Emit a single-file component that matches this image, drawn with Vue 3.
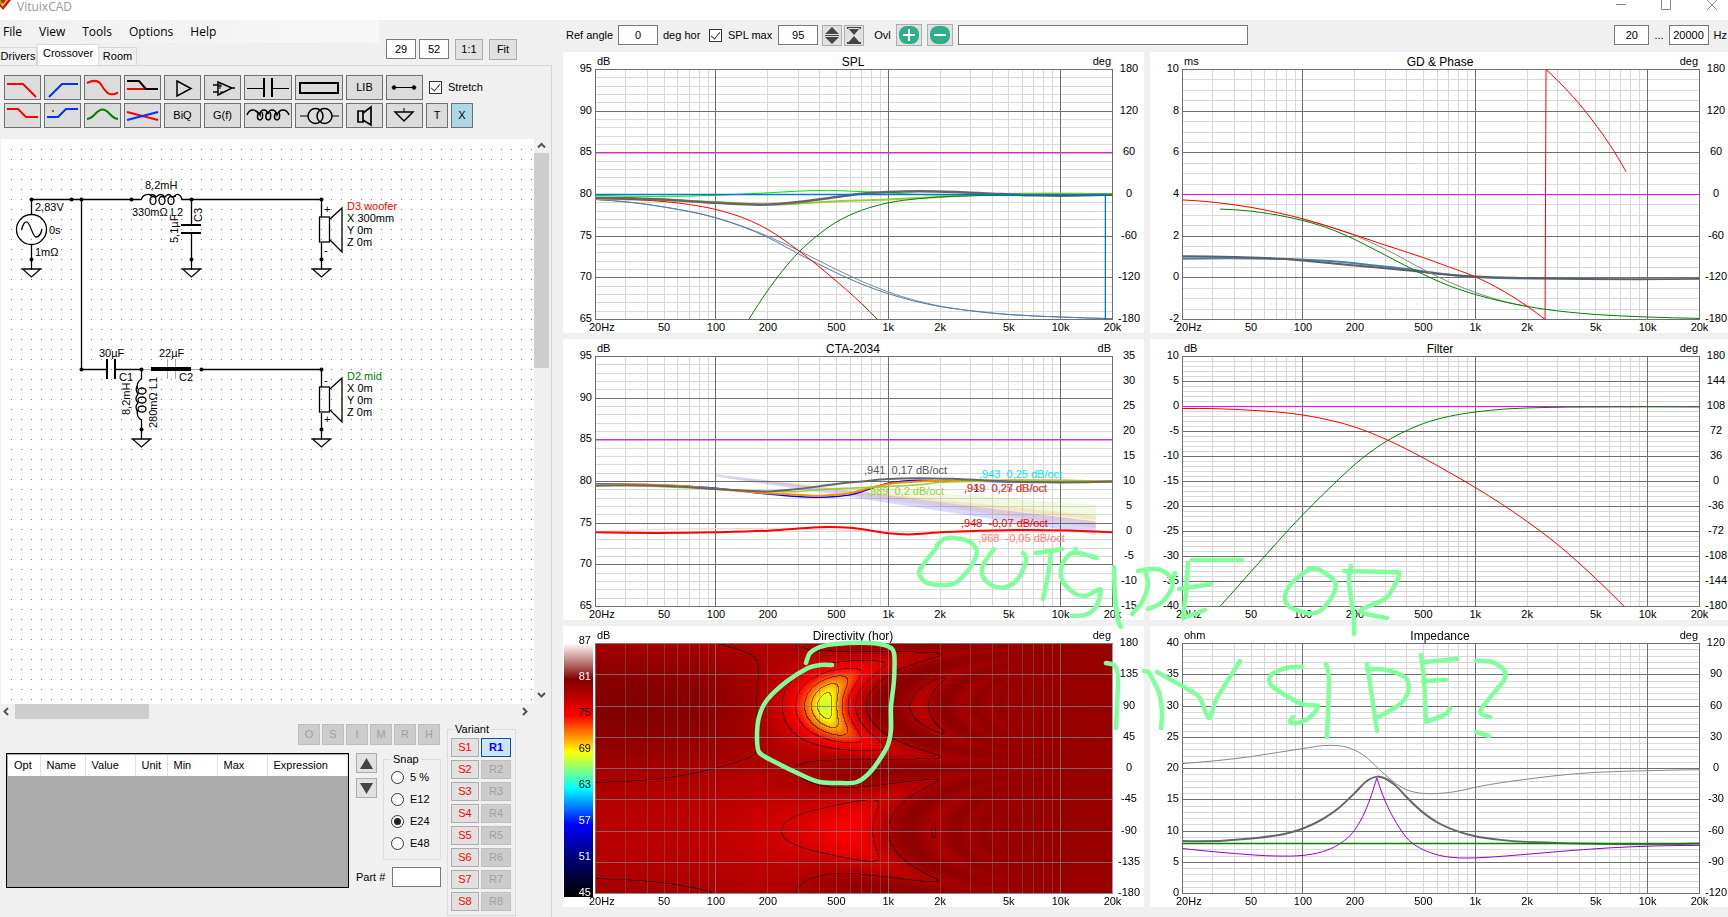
<template>
  <div class="app">
    <header class="titlebar">
      <svg class="logo" width="12" height="20" viewBox="0 0 12 20">
        <path d="M-5 0H11L3 10Z" fill="#d01010" />
        <path d="M-2 0L2.500 7L8 0Z" fill="#f5d020" />
        <path d="M0 0L3 4L6 0Z" fill="#c82010" />
        <path d="M0 2L1.500 4L2 1Z" fill="#2a8a20" />
      </svg>
      <span class="app-name">VituixCAD</span>
      <svg class="window-controls" width="104" height="20" viewBox="0 0 104 20">
        <path d="M0 4.500H10M45.500 0V9.500H54.500V0M91 0L101 10M101 0L91 10" />
      </svg>
    </header>

    <main class="workspace">
      <section class="left-panel">
        <div class="left-head">
          <div class="head-nav">
            <nav class="menu">
              <button v-for="item in menuItems" :key="item" type="button">{{ item }}</button>
            </nav>
            <div class="tabs">
              <button
                v-for="tab in tabs"
                :key="tab"
                type="button"
                :class="['tab', 'tab-' + tab.toLowerCase(), { active: tab === activeTab }]"
                @click="activeTab = tab"
              >{{ tab }}</button>
            </div>
          </div>
          <div class="zoom-tools">
            <input v-model="rows" class="field" aria-label="Rows" />
            <input v-model="cols" class="field" aria-label="Columns" />
            <button type="button" class="btn">1:1</button>
            <button type="button" class="btn">Fit</button>
          </div>
        </div>

        <div class="tab-page">
          <div class="parts">
            <div v-for="(row, r) in partRows" :key="r" class="parts-row">
              <button
                v-for="part in row"
                :key="part.name"
                type="button"
                :class="['part', part.size]"
                :aria-label="part.name"
              >
                <template v-if="part.text">{{ part.text }}</template>
                <svg v-else :width="part.size === 'wide' ? 48 : 37" height="25">
                  <path
                    v-for="(s, i) in part.strokes"
                    :key="i"
                    :d="s.d"
                    :stroke="s.color || '#000'"
                    :stroke-width="s.w || 2"
                    :fill="s.fill || 'none'"
                  />
                </svg>
              </button>
              <label v-if="r === 0" class="check">
                <input v-model="stretch" type="checkbox" />
                Stretch
              </label>
            </div>
          </div>

          <div class="canvas-wrap">
            <svg class="schematic" viewBox="1 139 533 565">
              <defs>
                <pattern id="dots" x="11" y="149" width="10" height="10" patternUnits="userSpaceOnUse">
                  <rect width="1" height="1" fill="#808080" />
                </pattern>
              </defs>
              <rect x="11" y="149" width="523" height="555" fill="url(#dots)" />

              <g class="wire">
                <path d="M31.500 199.500H141.500M181.500 199.500H321.500V217M81.500 199.500V369.500H106M115.500 369.500H141.500V379" />
                <path d="M31.500 199.500V214M31.500 245V269M191.500 199.500V225M191.500 233V269M321.500 243V269" />
                <path d="M201.500 369.500H321.500V387M321.500 413V439M141.500 419V439" />
              </g>
              <path d="M141.500 369.500H151M191 369.500H201.500M167.500 359V379M175.500 359V379" stroke="#aaa" fill="none" />
              <path d="M151 369H191" stroke="#000" stroke-width="4" />

              <circle v-for="(n, i) in nodes" :key="i" :cx="n[0]" :cy="n[1]" r="2" />
              <path
                v-for="(g, i) in grounds"
                :key="'g' + i"
                :d="`M${g[0] - 9} ${g[1]}h18l-9 8z`"
                class="symbol"
              />

              <ellipse cx="31.500" cy="229.500" rx="15" ry="15" class="symbol" />
              <path d="M21.500 230C23 224 25 221 27 222C31 224 32 236 36 237C39 237 41 234 42 229" class="symbol" />

              <g class="symbol">
                <path d="M141.500 199.500C142 195 150 192 153 197M174 197C177 192 181 195 182 199.500" />
                <path d="M150 196Q153 193 156 197Q161 192 165 197Q169 192 172 197L176 196" />
                <ellipse cx="153" cy="200.500" rx="3" ry="4" />
                <ellipse cx="162" cy="200.500" rx="3" ry="4" />
                <ellipse cx="171" cy="200.500" rx="3" ry="4" />
                <path d="M141.500 379Q136 382 137.500 389M137.500 410Q136 417 141.500 420" />
                <path d="M137 386Q135 390 138 394Q134 399 138 403Q134 407 138 412" />
                <ellipse cx="142" cy="391" rx="4" ry="3" />
                <ellipse cx="142" cy="400" rx="4" ry="3" />
                <ellipse cx="142" cy="409" rx="4" ry="3" />
              </g>

              <path d="M181 225H201M181 233H201M107 359V379M115 359V379" stroke="#000" stroke-width="2" />

              <g v-for="y in [0, 170]" :key="y" class="symbol">
                <rect x="319.500" :y="217 + y" width="10" height="25" />
                <path :d="`M330 ${219 + y}L342 ${208 + y}V${252 + y}L330 ${240 + y}`" />
              </g>

              <text
                v-for="(t, i) in schematicTexts"
                :key="'t' + i"
                :x="t.x"
                :y="t.y"
                :fill="t.color || '#000'"
                :transform="t.up ? `rotate(-90 ${t.x} ${t.y})` : null"
              >{{ t.text }}</text>
            </svg>
            <div class="vscroll">
              <svg width="15" height="14"><path d="M4 8.500L7.500 5L11 8.500" /></svg>
              <div class="vthumb"></div>
              <svg class="down" width="15" height="17"><path d="M4 6L7.500 9.500L11 6" /></svg>
            </div>
          </div>
          <div class="hscroll">
            <svg width="15" height="15"><path d="M8 4L4.500 7.500L8 11" /></svg>
            <div class="hthumb"></div>
            <svg class="right" width="15" height="15"><path d="M4 4L7.500 7.500L4 11" /></svg>
          </div>

          <div class="bottom">
            <div class="bottom-main">
              <div class="modes">
                <button v-for="m in modes" :key="m" type="button" class="btn" disabled>{{ m }}</button>
              </div>
              <div class="bottom-row">
                <div class="grid-box">
                  <table>
                    <colgroup>
                      <col v-for="c in columns" :key="c.name" :class="c.size" />
                    </colgroup>
                    <thead>
                      <tr>
                        <th v-for="c in columns" :key="c.name">{{ c.name }}</th>
                      </tr>
                    </thead>
                  </table>
                </div>
                <div class="side">
                  <div class="side-top">
                    <div class="arrows">
                      <button type="button" class="btn" aria-label="Up">
                        <svg width="13" height="11"><path d="M0 11L6.500 0L13 11Z" /></svg>
                      </button>
                      <button type="button" class="btn" aria-label="Down">
                        <svg width="13" height="11"><path d="M0 0L6.500 11L13 0Z" /></svg>
                      </button>
                    </div>
                    <fieldset class="snap">
                      <legend>Snap</legend>
                      <label v-for="s in snaps" :key="s">
                        <input v-model="snap" type="radio" name="snap" :value="s" />
                        {{ s }}
                      </label>
                    </fieldset>
                  </div>
                  <label class="part-no">
                    <span>Part #</span>
                    <input v-model="partNo" class="field" />
                  </label>
                </div>
              </div>
            </div>
            <fieldset class="variant">
              <legend>Variant</legend>
              <div class="variant-grid">
                <template v-for="n in 8" :key="n">
                  <button type="button" class="btn s-btn">S{{ n }}</button>
                  <button type="button" :class="['btn', { current: n === 1 }]" :disabled="n > 1">R{{ n }}</button>
                </template>
              </div>
            </fieldset>
          </div>
        </div>
      </section>

      <section class="right-panel">
        <div class="chart-tools">
          <label class="angle">Ref angle <input v-model="refAngle" class="field w40" /></label>
          <span class="deg">deg hor</span>
          <label class="check"><input v-model="splMaxOn" type="checkbox" /> SPL max</label>
          <input v-model="splMax" class="field w40 spl" aria-label="SPL max value" />
          <button type="button" class="btn spin" aria-label="Expand scale">
            <svg width="14" height="17"><path d="M0 7L7 0L14 7ZM0 10L7 17L14 10ZM0 8h14v1H0z" /></svg>
          </button>
          <button type="button" class="btn spin" aria-label="Compress scale">
            <svg width="14" height="17"><path d="M1 1L7 8L13 1ZM1 16L7 9L13 16ZM0 0h14v2H0zM0 15h14v2H0z" /></svg>
          </button>
          <span class="ovl">Ovl</span>
          <button type="button" class="btn overlay" aria-label="Add overlay">
            <svg width="20" height="18"><rect width="20" height="18" rx="8" fill="#2eae8c" /><path d="M4 9H16M10 3V15" stroke="#fff" stroke-width="2" /></svg>
          </button>
          <button type="button" class="btn overlay" aria-label="Remove overlay">
            <svg width="20" height="18"><rect width="20" height="18" rx="8" fill="#2eae8c" /><path d="M4 9H16" stroke="#fff" stroke-width="2" /></svg>
          </button>
          <input v-model="overlayName" class="field name" aria-label="Overlay name" />
          <div class="range">
            <input v-model="fMin" class="field w35" aria-label="Minimum frequency" />
            <span>...</span>
            <input v-model="fMax" class="field w40" aria-label="Maximum frequency" />
            <span>Hz</span>
          </div>
        </div>

        <div class="charts">
          <svg
            v-for="(c, i) in charts"
            :key="c.title"
            class="chart"
            :viewBox="`0 0 ${i % 2 ? 578 : 581} 281`"
          >
            <template v-if="c.heat">
              <defs>
                <linearGradient id="scale" x1="0" y1="0" x2="0" y2="1">
                  <stop v-for="s in colorStops" :key="s[0]" :offset="(87 - s[0]) / 42" :stop-color="`rgb(${s[1]})`" />
                </linearGradient>
              </defs>
              <rect x="1" y="17" width="29" height="254" fill="url(#scale)" />
              <foreignObject x="32" y="17" width="517" height="250">
                <canvas ref="heatCanvas" class="heat" width="517" height="250"></canvas>
              </foreignObject>
            </template>

            <g :class="c.heat ? 'grid-heat' : 'grid'" shape-rendering="crispEdges">
              <path v-if="c.minor" class="minor" :d="hLines(c.minor)" />
              <path class="minor" :d="minorV" />
              <path class="major" :d="hLines(c.major)" />
              <path class="major" :d="majorV" />
              <rect class="major" x="32.500" y="17.500" width="517" height="250" />
            </g>

            <path
              v-for="(b, k) in c.bands || []"
              :key="'b' + k"
              :d="bandPath(c, b.points)"
              :fill="b.color"
              fill-opacity="0.15"
            />
            <path
              v-for="(l, k) in c.lines"
              :key="'l' + k"
              :d="linePath(c, l)"
              :stroke="l.color"
              :stroke-width="l.w || 1"
              fill="none"
            />

            <text class="chart-title" x="290" y="14">{{ c.title }}</text>
            <text x="34" y="13">{{ c.unit }}</text>
            <text x="548" y="13" text-anchor="end">{{ c.rightUnit }}</text>
            <text
              v-for="(v, k) in c.left"
              :key="'v' + k"
              :x="c.heat ? 28 : 29"
              :y="c.heat ? 18 + k * 36 : 20 + (250 * k) / (c.left.length - 1)"
              :fill="c.heat && [81, 57, 51, 45].includes(v) ? '#fff' : '#000'"
              text-anchor="end"
            >{{ v }}</text>
            <text
              v-for="(v, k) in c.right"
              :key="'r' + k"
              x="566"
              :y="20 + (250 * k) / (c.right.length - 1)"
              text-anchor="middle"
            >{{ v }}</text>
            <text x="26" y="279">20Hz</text>
            <text v-for="t in freqLabels" :key="t[0]" :x="fx(t[0])" y="279" text-anchor="middle">{{ t[1] }}</text>
            <text
              v-for="(n, k) in c.notes || []"
              :key="'n' + k"
              class="note"
              :x="n[0]"
              :y="n[1]"
              :fill="n[2]"
            >{{ n[3] }}</text>
          </svg>

          <svg class="ink" viewBox="563 52 1165 855">
            <path v-for="(s, i) in inkStrokes" :key="i" :d="inkPath(s)" />
          </svg>
        </div>
      </section>
    </main>
  </div>
</template>

<script setup>
import { ref, onMounted } from 'vue'

const menuItems = ['File', 'View', 'Tools', 'Options', 'Help']
const tabs = ['Drivers', 'Crossover', 'Room']
const activeTab = ref('Crossover')
const rows = ref('29')
const cols = ref('52')
const stretch = ref(true)
const modes = ['O', 'S', 'I', 'M', 'R', 'H']
const snaps = ['5 %', 'E12', 'E24', 'E48']
const snap = ref('E24')
const partNo = ref('')
const refAngle = ref('0')
const splMaxOn = ref(true)
const splMax = ref('95')
const overlayName = ref('')
const fMin = ref('20')
const fMax = ref('20000')
const heatCanvas = ref(null)

const columns = [
  { name: 'Opt', size: 'c-opt' },
  { name: 'Name', size: 'c-name' },
  { name: 'Value', size: 'c-value' },
  { name: 'Unit', size: 'c-unit' },
  { name: 'Min', size: 'c-value' },
  { name: 'Max', size: 'c-value' },
  { name: 'Expression', size: 'c-expr' }
]

const RED = '#f00'
const BLUE = '#0030ff'
const GREEN = '#008000'

const partRows = [
  [
    { name: 'Low pass', strokes: [{ d: 'M3 9H19L32 22', color: RED }] },
    { name: 'High pass', strokes: [{ d: 'M5 22L18 9H34', color: BLUE }] },
    { name: 'All pass', strokes: [{ d: 'M3 8C9 5 14 5 17 9.500S22 18 26 19S31 19 34 17.500', color: RED }] },
    { name: 'Shelf', strokes: [{ d: 'M3 14H23', color: RED }, { d: 'M3 6H15L22 14H34' }] },
    { name: 'Buffer', strokes: [{ d: 'M13 6L27 13.500L13 21Z', w: 1.5 }] },
    { name: 'Op amp', strokes: [{ d: 'M14 7L28 13L14 20ZM9 10H14M9 17H14M28 13H31', w: 1.5 }, { d: 'M16 8V14M14 11H18M16 17H19', w: 1 }] },
    { name: 'Capacitor', size: 'wide', strokes: [{ d: 'M3 13.500H20M28 13.500H45', w: 1 }, { d: 'M20 3V22M28 3V22' }] },
    { name: 'Resistor', size: 'wide', strokes: [{ d: 'M5 8H43V18H5Z' }] },
    { name: 'Library', text: 'LIB' },
    { name: 'Wire', strokes: [{ d: 'M8 12.500H28', w: 1 }, { d: 'M6 12.500a2 2 0 1 0 4 0a2 2 0 1 0 -4 0M26 12.500a2 2 0 1 0 4 0a2 2 0 1 0 -4 0', fill: '#000', w: 0.5 }] }
  ],
  [
    { name: 'Low shelf', strokes: [{ d: 'M3 6H14L22 14H34', color: RED }] },
    { name: 'High shelf', strokes: [{ d: 'M3 14H14L22 6H34', color: BLUE }, { d: 'M8 8H10', w: 1 }] },
    { name: 'Peak', strokes: [{ d: 'M3 16C11 15 12 6.500 18.500 6.500S26 15 34 16', color: GREEN }] },
    { name: 'Tilt', strokes: [{ d: 'M3 9L34 17', color: RED }, { d: 'M3 17L34 9', color: BLUE }] },
    { name: 'Biquad', text: 'BiQ' },
    { name: 'Transfer function', text: 'G(f)' },
    { name: 'Inductor', size: 'wide', strokes: [{ d: 'M3 12Q5 7 9 7Q12 7 16 12Q16 7 20 7Q23 7 24 11Q25 7 28 7Q32 7 33 12Q35 7 39 7Q43 7 45 12', w: 1.5 }, { d: 'M15 9C9 19 22 20 18 9M23 9C18 19 30 20 26 9M32 9C26 19 39 20 35 9', w: 1.5 }] },
    { name: 'Transformer', size: 'wide', strokes: [{ d: 'M5 13H13M37 13H44', w: 1 }, { d: 'M13 13a7.500 7.500 0 1 0 15 0a7.500 7.500 0 1 0 -15 0M22 13a7.500 7.500 0 1 0 15 0a7.500 7.500 0 1 0 -15 0', w: 1.5 }] },
    { name: 'Driver', strokes: [{ d: 'M12 8H17V19H12ZM17 10L25 4V22L17 17', w: 1.7 }] },
    { name: 'Ground', strokes: [{ d: 'M18 5V9', w: 1 }, { d: 'M9 9H27L18 18Z', w: 1.5 }] },
    { name: 'Text', text: 'T', size: 'small' },
    { name: 'Delete', text: 'X', size: 'small marked' }
  ]
]

const nodes = [
  [31.5, 199.5], [71.5, 199.5], [81.5, 199.5], [131.5, 199.5], [191.5, 199.5], [321.5, 199.5],
  [31.5, 259.5], [191.5, 259.5], [321.5, 259.5], [81.5, 369.5], [141.5, 369.5], [201.5, 369.5],
  [321.5, 369.5], [141.5, 429.5], [321.5, 429.5]
]
const grounds = [[31.5, 269], [191.5, 269], [321.5, 269], [141.5, 439], [321.5, 439]]

const schematicTexts = [
  { x: 35, y: 211, text: '2,83V' },
  { x: 49, y: 234, text: '0s' },
  { x: 35, y: 256, text: '1mΩ' },
  { x: 145, y: 189, text: '8,2mH' },
  { x: 132, y: 216, text: '330mΩ L2' },
  { x: 178, y: 243, text: '5,1µF', up: true },
  { x: 202, y: 222, text: 'C3', up: true },
  { x: 99, y: 357, text: '30µF' },
  { x: 159, y: 357, text: '22µF' },
  { x: 119, y: 381, text: 'C1' },
  { x: 179, y: 381, text: 'C2' },
  { x: 130, y: 415, text: '8,2mH', up: true },
  { x: 157, y: 428, text: '280mΩ L1', up: true },
  { x: 324, y: 213, text: '+' },
  { x: 324, y: 254, text: '-' },
  { x: 324, y: 384, text: '-' },
  { x: 324, y: 423, text: '+' },
  { x: 347, y: 210, text: 'D3 woofer', color: RED },
  { x: 347, y: 222, text: 'X 300mm' },
  { x: 347, y: 234, text: 'Y 0m' },
  { x: 347, y: 246, text: 'Z 0m' },
  { x: 347, y: 380, text: 'D2 mid', color: GREEN },
  { x: 347, y: 392, text: 'X 0m' },
  { x: 347, y: 404, text: 'Y 0m' },
  { x: 347, y: 416, text: 'Z 0m' }
]

const freqLabels = [[50, '50'], [100, '100'], [200, '200'], [500, '500'], [1000, '1k'], [2000, '2k'], [5000, '5k'], [10000, '10k'], [20000, '20k']]

function steps(from, to, n) {
  return Array.from({ length: n + 1 }, (_, i) => from + ((to - from) * i) / n)
}

const charts = [
  {
    title: 'SPL', unit: 'dB', rightUnit: 'deg', top: 95, bottom: 65, major: 6, minor: 30,
    left: steps(95, 65, 6), right: steps(180, -180, 6),
    lines: [
      { color: '#c3c', w: 1.5, points: [[20, 85], [20000, 85]] },
      { color: '#888', points: [[20, 79.4], [50, 78.5], [100, 77.2], [200, 75], [300, 73.3], [500, 71], [700, 69.6], [1000, 68.3], [2000, 66.6], [3000, 66.05], [5000, 65.6], [10000, 65.3], [20000, 65.1]] },
      { color: '#4682b4', points: [[20, 79.4], [50, 78.5], [100, 77.2], [200, 74.85], [300, 72.9], [500, 70.6], [700, 69.25], [1000, 68.1], [2000, 66.55], [3000, 66.05], [5000, 65.6], [10000, 65.3], [20000, 65.1]] },
      { color: '#00e800', points: [[20, 79.9], [100, 79.9], [160, 80.1], [200, 80.2], [300, 80.4], [450, 80.5], [600, 80.4], [800, 80.3], [1500, 80], [4000, 80]] },
      { color: '#9acd32', w: 2, points: [[20, 79.5], [100, 79.1], [200, 78.8], [300, 78.9], [500, 79.2], [1000, 79.4], [2000, 79.7], [4000, 80], [20000, 80]] },
      { color: RED, points: [[20, 79.5], [40, 79.3], [70, 78.8], [100, 78.2], [150, 77.05], [200, 75.8], [300, 73.3], [500, 69.6], [700, 66.9], [865, 65]] },
      { color: '#666', w: 2.5, points: [[20, 79.6], [50, 79.4], [100, 79], [200, 78.8], [300, 79.1], [500, 79.7], [700, 80.1], [1000, 80.3], [1500, 80.4], [2500, 80.3], [4000, 80.1], [7000, 79.9], [20000, 80]] },
      { color: GREEN, points: [[155, 65], [200, 68.5], [300, 73], [400, 75.3], [500, 76.7], [700, 78.1], [1000, 79], [1500, 79.5], [2500, 79.8], [5000, 79.9], [20000, 79.9]] },
      { color: '#0078d7', w: 1.3, straight: true, points: [[20, 80], [18180, 80], [18180, 65]] }
    ]
  },
  {
    title: 'GD & Phase', unit: 'ms', rightUnit: 'deg', top: 10, bottom: -2, major: 6, minor: 24,
    left: steps(10, -2, 6), right: steps(180, -180, 6),
    lines: [
      { color: '#f0f', points: [[20, 4], [20000, 4]] },
      { color: '#4682b4', w: 2, points: [[20, 0.92], [80, 0.9], [150, 0.8], [250, 0.61], [400, 0.42], [600, 0.22], [1000, 0.04], [3000, -0.03], [5000, -0.03]] },
      { color: '#5f5f5f', w: 2, points: [[20, 1.04], [40, 1], [80, 0.9], [100, 0.83], [200, 0.59], [400, 0.36], [600, 0.2], [1000, 0.06], [2000, -0.01], [20000, -0.05]] },
      { color: '#888', points: [[100, 2.8], [150, 2.39], [200, 2.03], [300, 1.38], [500, 0.4], [700, -0.19], [1000, -0.7], [1500, -1.15], [2000, -1.37]] },
      { color: GREEN, points: [[33, 3.3], [50, 3.2], [80, 2.93], [100, 2.75], [150, 2.29], [200, 1.84], [300, 1.09], [500, 0.16], [700, -0.37], [1000, -0.8], [1500, -1.17], [2500, -1.5], [5000, -1.76], [10000, -1.88], [20000, -1.95]] },
      { color: RED, points: [[20, 3.74], [50, 3.38], [100, 2.83], [200, 2.06], [300, 1.57], [500, 0.97], [700, 0.53], [1000, 0.05], [1500, -0.7], [2000, -1.36], [2540, -2]] },
      { color: RED, straight: true, points: [[2540, -2], [2573, 10]] },
      { color: RED, points: [[2573, 10], [3000, 9.47], [4000, 8.36], [5000, 7.35], [6000, 6.42], [7500, 5.09]] }
    ]
  },
  {
    title: 'CTA-2034', unit: 'dB', rightUnit: 'dB', top: 95, bottom: 65, major: 6, minor: 30,
    left: steps(95, 65, 6), right: steps(35, -15, 10),
    bands: [
      { color: '#9acd32', points: [[100, 80.6], [16000, 77.2], [16000, 75.4]] },
      { color: '#ff8c00', points: [[100, 80.6], [16000, 75.9], [16000, 74.4]] },
      { color: '#0000ff', points: [[100, 80.9], [16000, 75.2], [16000, 73.6], [100, 80.6]] }
    ],
    lines: [
      { color: '#c3c', w: 1.5, points: [[20, 85], [20000, 85]] },
      { color: '#fcd0d0', points: [[20, 74], [300, 74.3], [700, 74.1], [20000, 74]] },
      { color: '#00f', w: 1.5, points: [[20, 79.7], [60, 79.5], [100, 79.2], [200, 78.5], [300, 78.2], [400, 78.1], [500, 78.2], [600, 78.4], [800, 79.2], [1000, 79.8], [1300, 80.1], [2000, 80.1], [4000, 80], [20000, 80]] },
      { color: '#ff8c00', w: 2, points: [[20, 79.6], [60, 79.5], [100, 79.1], [200, 78.6], [300, 78.4], [400, 78.3], [500, 78.4], [600, 78.6], [800, 79.3], [1000, 79.7], [1500, 80], [2500, 80.1], [20000, 80]] },
      { color: '#9acd32', w: 1.5, points: [[20, 79.6], [100, 79.1], [200, 78.8], [300, 78.8], [400, 79], [600, 79.2], [1000, 79.4], [1500, 79.6], [2000, 79.9], [3000, 80], [20000, 80]] },
      { color: '#666', w: 2, points: [[20, 79.5], [60, 79.4], [100, 79.1], [150, 78.9], [200, 78.8], [300, 79.1], [500, 79.7], [700, 80], [1000, 80.3], [1500, 80.4], [2500, 80.3], [5000, 80], [8000, 79.9], [20000, 80]] },
      { color: RED, w: 2, points: [[20, 73.9], [100, 73.9], [200, 74.1], [300, 74.35], [450, 74.55], [600, 74.45], [800, 74.1], [1000, 73.8], [1300, 73.65], [2000, 73.9], [20000, 73.9]] }
    ],
    notes: [
      [301, 135, '#555', ',941  0,17 dB/oct'],
      [416, 139, '#00e5ee', ',943  0,25 dB/oct'],
      [304, 156, '#9acd32', ',989  0,2 dB/oct'],
      [401, 153, '#00f', ',919  0,27 dB/oct'],
      [401, 153, '#ff6a00', ',949  0,25 dB/oct'],
      [398, 188, '#f00', ',948  -0,07 dB/oct'],
      [415, 203, '#fa8072', ',968  -0,05 dB/oct']
    ]
  },
  {
    title: 'Filter', unit: 'dB', rightUnit: 'deg', top: 10, bottom: -40, major: 10, minor: 50,
    left: steps(10, -40, 10), right: steps(180, -180, 10),
    lines: [
      { color: '#f0f', points: [[20, 0], [20000, 0]] },
      { color: RED, points: [[20, -0.4], [50, -0.75], [100, -1.7], [150, -2.9], [200, -4.1], [300, -6.5], [500, -10.3], [700, -13.1], [1000, -16.2], [2000, -23], [3000, -27.6], [5000, -34.4], [7320, -40]] },
      { color: GREEN, points: [[33, -40], [50, -33], [100, -21.6], [150, -15.6], [200, -11.6], [300, -7.1], [400, -4.8], [500, -3.4], [700, -2], [1000, -1.1], [1500, -0.5], [2500, -0.2], [5000, -0.1], [20000, -0.1]] }
    ]
  },
  {
    title: 'Directivity (hor)', unit: 'dB', rightUnit: 'deg', heat: true, major: 8,
    left: steps(87, 45, 7), right: steps(180, -180, 8), lines: []
  },
  {
    title: 'Impedance', unit: 'ohm', rightUnit: 'deg', top: 40, bottom: 0, major: 8, minor: 40,
    left: steps(40, 0, 8), right: steps(120, -120, 8),
    lines: [
      { color: '#888', points: [[20, 20.8], [50, 21.9], [100, 23.2], [140, 23.7], [180, 23.4], [220, 22.3], [300, 19], [350, 17.5], [400, 16.6], [500, 16], [600, 16], [800, 16.4], [1000, 17], [2000, 18.3], [4000, 19.2], [10000, 19.65], [20000, 19.8]] },
      { color: '#9400d3', points: [[20, 7.2], [40, 6.4], [70, 6], [100, 6.1], [130, 6.7], [160, 7.8], [200, 10.2], [230, 13.2], [250, 15.8], [268, 18.5]] },
      { color: '#9400d3', points: [[268, 18.5], [300, 14.8], [350, 11.2], [400, 8.9], [500, 7], [600, 6.2], [800, 5.7], [1000, 5.7], [1500, 6], [3000, 6.7], [6000, 7.3], [20000, 7.7]] },
      { color: '#666', w: 2, points: [[20, 8.4], [50, 8.8], [80, 9.6], [100, 10.4], [130, 11.9], [160, 13.6], [200, 16.1], [240, 18.2], [270, 18.7], [300, 18.4], [350, 17.1], [400, 15.4], [500, 12.9], [600, 11.4], [800, 9.9], [1000, 9.15], [1500, 8.5], [3000, 8.1], [20000, 8]] },
      { color: GREEN, w: 1.3, points: [[20, 8], [20000, 8]] }
    ]
  }
]

// plot area of every chart: x 32..549, y 17..267
function fx(f) {
  return 32.5 + (517 * Math.log10(f / 20)) / 3
}

function vy(c, v) {
  return 17.5 + (250 * (c.top - v)) / (c.top - c.bottom)
}

function hLines(n) {
  return steps(0, 250, n).map(y => `M32 ${Math.round(y + 17) + 0.5}H550`).join('')
}

function vLines(list) {
  return list.map(f => `M${Math.floor(fx(f)) + 0.5} 17V267`).join('')
}

const minorV = vLines([30, 40, 50, 60, 70, 80, 90].concat(
  ...[100, 1000].map(d => [2, 3, 4, 5, 6, 7, 8, 9].map(n => n * d))
))
const majorV = vLines([100, 1000, 10000])

// y(x) curve through unevenly spaced points, slopes weighted by the spacing
function curve(p) {
  const n = p.length
  if (n < 3) return 'M' + p.map(q => q.join(' ')).join('L')
  const h = []
  const s = []
  for (let i = 0; i < n - 1; i++) {
    h.push(p[i + 1][0] - p[i][0])
    s.push((p[i + 1][1] - p[i][1]) / h[i])
  }
  const m = p.map((_, i) => {
    if (i === 0) return s[0] - ((s[1] - s[0]) * h[0]) / (h[0] + h[1])
    if (i === n - 1) return s[n - 2] + ((s[n - 2] - s[n - 3]) * h[n - 2]) / (h[n - 2] + h[n - 3])
    return (s[i - 1] * h[i] + s[i] * h[i - 1]) / (h[i - 1] + h[i])
  })
  let d = `M${p[0][0]} ${p[0][1]}`
  for (let i = 0; i < n - 1; i++) {
    const k = h[i] / 3
    d += `C${p[i][0] + k} ${p[i][1] + m[i] * k} ${p[i + 1][0] - k} ${p[i + 1][1] - m[i + 1] * k} ${p[i + 1][0]} ${p[i + 1][1]}`
  }
  return d
}

// Catmull-Rom through the pen positions
function inkPath(p) {
  let d = `M${p[0][0]} ${p[0][1]}`
  for (let i = 0; i < p.length - 1; i++) {
    const a = p[i - 1] || p[i]
    const b = p[i]
    const c = p[i + 1]
    const e = p[i + 2] || c
    d += `C${b[0] + (c[0] - a[0]) / 7} ${b[1] + (c[1] - a[1]) / 7} ` +
      `${c[0] - (e[0] - b[0]) / 7} ${c[1] - (e[1] - b[1]) / 7} ${c[0]} ${c[1]}`
  }
  return d
}

function linePath(c, line) {
  const pts = line.points.map(([f, v]) => [fx(f), vy(c, v)])
  return line.straight ? 'M' + pts.map(p => p.join(' ')).join('L') : curve(pts)
}

function bandPath(c, points) {
  return 'M' + points.map(([f, v]) => `${fx(f)} ${vy(c, v)}`).join('L') + 'Z'
}

const colorStops = [
  [87, [255, 255, 255]], [81, [128, 0, 0]], [75, [255, 0, 0]], [69, [255, 255, 0]],
  [63, [0, 255, 255]], [57, [0, 0, 255]], [51, [0, 0, 110]], [45, [0, 0, 0]]
]

function levelColor(v) {
  for (let i = 1; i < colorStops.length; i++) {
    const [lo, b] = colorStops[i]
    const [hi, a] = colorStops[i - 1]
    if (v >= lo) {
      const t = Math.min(1, (hi - v) / (hi - lo))
      return a.map((x, k) => x + (b[k] - x) * t)
    }
  }
  return [0, 0, 0]
}

const mul = (a, b) => [a[0] * b[0] - a[1] * b[1], a[0] * b[1] + a[1] * b[0]]
const add = (a, b) => [a[0] + b[0], a[1] + b[1]]
const div = (a, b) => {
  const m = b[0] * b[0] + b[1] * b[1]
  return [(a[0] * b[0] + a[1] * b[1]) / m, (a[1] * b[0] - a[0] * b[1]) / m]
}
const par = (a, b) => div(mul(a, b), add(a, b))

// two way crossover into 8 ohm: L2/C3 to the woofer, C1/L1 to the inverted mid
function transfer(f) {
  const w = 2 * Math.PI * f
  const zw = par([8, 0], [0, -1 / (w * 5.1e-6)])
  const zm = par([8, 0], [0.28, w * 8.2e-3])
  return {
    woofer: div(zw, add(zw, [0.33, w * 8.2e-3])),
    mid: div(zm, add(zm, [0, -1 / (w * 30e-6)]))
  }
}

function drawHeat() {
  const canvas = [].concat(heatCanvas.value)[0]
  const W = canvas.width
  const H = canvas.height
  const ctx = canvas.getContext('2d')
  const img = ctx.createImageData(W, H)
  const level = new Float32Array(W * H)
  const dist = 2
  const offset = 0.3
  for (let x = 0; x < W; x++) {
    const f = 20 * Math.pow(10, (3 * x) / W)
    const { woofer, mid } = transfer(f)
    for (let y = 0; y < H; y++) {
      const angle = Math.PI * (1 - (2 * y) / H)
      const r = Math.sqrt(dist * dist + offset * offset - 2 * dist * offset * Math.sin(angle))
      const phase = (-2 * Math.PI * f * (r - dist)) / 344
      const w = mul(woofer, [(Math.cos(phase) * dist) / r, (Math.sin(phase) * dist) / r])
      level[y * W + x] = 79.9 + 20 * Math.log10(Math.hypot(w[0] - mid[0], w[1] - mid[1]))
    }
  }
  const band = v => Math.floor((v - 45) / 2)
  for (let y = 0; y < H; y++) {
    for (let x = 0; x < W; x++) {
      const i = y * W + x
      const v = level[i]
      const edge = (x + 1 < W && band(level[i + 1]) !== band(v)) || (y + 1 < H && band(level[i + W]) !== band(v))
      const k = edge && v < 80 ? 0.5 : 1
      const rgb = levelColor(v)
      img.data.set([rgb[0] * k, rgb[1] * k, rgb[2] * k, 255], i * 4)
    }
  }
  ctx.putImageData(img, 0, 0)
}

onMounted(drawHeat)

// pen strokes over the charts
const inkStrokes = [
  [[937, 547], [923, 565], [919, 573], [925, 582], [940, 585], [955, 583], [970, 568], [977, 552], [970, 542], [955, 538], [944, 539], [937, 545]],
  [[994, 549], [983, 565], [983, 577], [993, 586], [1006, 587], [1017, 580], [1025, 565], [1026, 557], [1023, 553]],
  [[1036, 553], [1062, 549]],
  [[1051, 553], [1048, 575], [1043, 599]],
  [[1097, 558], [1079, 553], [1070, 554], [1062, 565], [1062, 580], [1074, 593], [1085, 596], [1098, 590], [1101, 591], [1096, 607], [1085, 615], [1072, 616]],
  [[1075, 549], [1076, 549]],
  [[1114, 567], [1115, 595], [1118, 620], [1121, 627]],
  [[1146, 573], [1148, 585], [1142, 602], [1132, 614]],
  [[1138, 571], [1150, 569], [1161, 570], [1172, 579], [1171, 590], [1161, 603], [1148, 609]],
  [[1175, 573], [1171, 582]],
  [[1188, 563], [1186, 592], [1183, 618]],
  [[1183, 618], [1205, 610]],
  [[1179, 589], [1211, 584]],
  [[1192, 560], [1242, 560]],
  [[1309, 568], [1320, 570], [1335, 582], [1333, 595], [1320, 611], [1307, 613], [1290, 607], [1285, 598], [1290, 585], [1305, 572], [1314, 568]],
  [[1351, 566], [1349, 582], [1354, 620], [1354, 634]],
  [[1344, 571], [1391, 572], [1399, 575], [1386, 598], [1360, 611], [1387, 618]],
  [[1106, 663], [1115, 666], [1118, 680], [1116, 728]],
  [[1144, 671], [1149, 673], [1159, 693], [1162, 713], [1161, 728]],
  [[1157, 672], [1189, 690], [1200, 698], [1209, 718], [1217, 698], [1240, 661]],
  [[1302, 667], [1286, 668], [1271, 675], [1271, 685], [1290, 698], [1305, 705], [1318, 706], [1309, 718], [1297, 723], [1290, 722], [1293, 717]],
  [[1326, 664], [1329, 680], [1327, 737]],
  [[1367, 664], [1372, 697], [1377, 731]],
  [[1367, 669], [1387, 670], [1406, 678], [1408, 692], [1399, 705], [1378, 717]],
  [[1421, 655], [1424, 680], [1426, 722]],
  [[1426, 722], [1446, 714], [1450, 708]],
  [[1425, 662], [1457, 659]],
  [[1423, 681], [1446, 680]],
  [[1476, 661], [1492, 662], [1504, 670], [1504, 680], [1492, 695], [1480, 712], [1490, 717]],
  [[1476, 732], [1489, 736]],
  [[806, 663], [810, 653], [820, 647], [835, 644], [869, 643], [887, 646], [894, 653], [894, 680], [891, 707], [891, 730], [887, 747], [872, 770], [857, 782], [838, 783], [820, 782], [808, 778], [771, 760], [759, 752], [757, 737], [759, 717], [767, 700], [786, 682], [808, 668], [820, 665], [832, 665]]
]
</script>

<style>
html, body { margin: 0; background: #f0f0f0; }
</style>

<style scoped>
.app {
  display: flex; flex-direction: column; min-height: 100vh; overflow: hidden;
  background: #f0f0f0; color: #000; font: 11px/13px "Liberation Sans", Arial, sans-serif;
}
.app * { box-sizing: border-box; }
button, input { font: inherit; color: inherit; }

.titlebar { display: flex; align-items: flex-start; height: 20px; background: #fff; padding-right: 8px; }
.logo { margin-right: 5px; }
.app-name { flex: 1; color: #999; font: 12px/14px "Open Sans", sans-serif; }
.window-controls path { fill: none; stroke: #888; }

.workspace { display: flex; flex: 1; }
.left-panel { display: flex; flex-direction: column; width: 552px; margin-right: 11px; flex: none; }
.right-panel { flex: 1; min-width: 0; }

.left-head { display: flex; height: 45px; }
.head-nav { width: 379px; margin-right: 7px; display: flex; flex-direction: column; }
.menu {
  display: flex; gap: 17px; height: 24px; padding-left: 3px; align-items: center;
  background: linear-gradient(90deg, #f0f0f0, #f7f7f7);
}
.menu button { border: 0; background: none; padding: 0; font: 12px/18px "Open Sans", sans-serif; }
.tabs { display: flex; align-items: flex-end; height: 22px; }
.tab {
  height: 18px; padding: 0; border: 1px solid #d9d9d9; border-left: 0; border-bottom: 0;
  background: #f0f0f0; font-size: 11px; text-align: center; white-space: nowrap;
}
.tab.active { height: 21px; background: #fff; border-left: 1px solid #d9d9d9; padding-bottom: 3px; z-index: 1; }
.tab-drivers { width: 37px; }
.tab-crossover { width: 62px; }
.tab-room { width: 38px; }

.zoom-tools { display: flex; align-items: flex-start; gap: 3px; padding-top: 19px; }
.zoom-tools .field { width: 30px; height: 20px; }
.zoom-tools .btn { width: 28px; height: 21px; margin-left: 3px; }

.field { height: 20px; padding: 0 2px; border: 1px solid #7a7a7a; background: #fff; text-align: center; outline: none; }
.btn { padding: 0; border: 1px solid #adadad; background: #e1e1e1; display: inline-flex; align-items: center; justify-content: center; }
.btn:disabled { background: #ccc; border-color: #bfbfbf; color: #a0a0a0; }

.tab-page { flex: 1; border-top: 1px solid #d9d9d9; border-right: 1px solid #d5d5d5; padding-top: 9px; }
.parts { display: flex; flex-direction: column; gap: 3px; padding-left: 4px; margin-bottom: 11px; }
.parts-row { display: flex; gap: 3px; height: 25px; }
.part {
  width: 37px; height: 25px; padding: 0; border: 1px solid #707070; background: #dcdcdc;
  display: flex; align-items: center; justify-content: center; overflow: hidden;
}
.part svg { flex: none; }
.part.wide { width: 48px; }
.part.small { width: 22px; }
.part.marked { background: #add8e6; }
.check { display: flex; align-items: center; gap: 6px; padding-left: 3px; white-space: nowrap; }
.check input {
  appearance: none; width: 13px; height: 13px; margin: 0; border: 1px solid #333; background: #fff;
  display: grid; place-items: center;
}
.check input:checked::after {
  content: ""; width: 4px; height: 8px; margin-top: -2px; border: solid #333;
  border-width: 0 1px 1px 0; transform: rotate(40deg);
}

.canvas-wrap { display: flex; padding-left: 1px; }
.schematic { display: block; width: 533px; flex: none; background: #fff; }
.schematic text { font-size: 11px; }
.wire, .symbol { fill: none; stroke: #000; stroke-width: 1.3; }
.vscroll { width: 15px; display: flex; flex-direction: column; background: #f0f0f0; }
.vthumb { height: 215px; background: #cdcdcd; }
.vscroll .down { margin-top: auto; }
.hscroll { display: flex; height: 16px; width: 534px; align-items: flex-start; }
.hthumb { width: 134px; height: 15px; background: #cdcdcd; }
.hscroll .right { margin-left: auto; }
.vscroll path, .hscroll path { fill: none; stroke: #555; stroke-width: 2; }

.bottom { display: flex; gap: 6px; padding: 3px 0 0 6px; }
.bottom-main { width: 435px; padding-top: 1px; }
.modes { display: flex; justify-content: flex-end; gap: 2px; margin-bottom: 8px; padding-right: 1px; }
.modes .btn { width: 22px; height: 21px; }
.bottom-row { display: flex; gap: 7px; }
.grid-box { width: 343px; height: 135px; border: 1px solid #000; background: #ababab; padding: 1px 0 0 1px; }
table { width: 100%; table-layout: fixed; border-collapse: collapse; }
th { height: 21px; padding: 0 0 0 6px; background: #fff; border-right: 1px solid #e0e0e0; font-weight: normal; text-align: left; }
.c-opt { width: 32px; }
.c-name { width: 45px; }
.c-value { width: 50px; }
.c-unit { width: 32px; }

.side { width: 85px; }
.side-top { display: flex; gap: 6px; }
.arrows { display: flex; flex-direction: column; gap: 5px; }
.arrows .btn { width: 21px; height: 20px; }
.arrows path, .spin path { fill: #444; }
fieldset { margin: 0; min-width: 0; border: 1px solid #dcdcdc; }
legend { padding: 0 2px; }
.snap { width: 58px; height: 107px; padding: 0 0 0 7px; }
.snap label { display: flex; align-items: center; gap: 6px; height: 22px; }
.snap input {
  appearance: none; width: 13px; height: 13px; margin: 0; border: 1px solid #333; border-radius: 50%;
  background: #fff; display: grid; place-items: center;
}
.snap input:checked::after { content: ""; width: 7px; height: 7px; border-radius: 50%; background: #222; }
.part-no { display: flex; justify-content: space-between; align-items: center; margin-top: 7px; white-space: nowrap; }
.part-no .field { width: 49px; }

.variant { width: 69px; height: 193px; padding: 2px 3px 0; }
.variant legend { margin-left: 2px; }
.variant-grid { display: grid; grid-template-columns: 28px 30px; gap: 3px 2px; }
.variant-grid .btn { height: 19px; }
.s-btn { color: #f00; }
.current { background: #cce4f7; border-color: #005499; color: #00f; font-weight: bold; }

.chart-tools { display: flex; align-items: center; height: 32px; padding: 0 0 2px 3px; white-space: nowrap; }
.w40 { width: 40px; }
.w35 { width: 35px; }
.angle { display: flex; align-items: center; gap: 5px; width: 92px; justify-content: space-between; }
.deg { width: 43px; margin-left: 5px; }
.spl { margin: 0 4px 0 6px; }
.spin { width: 20px; height: 21px; margin-right: 2px; }
.ovl { width: 22px; margin-left: 8px; }
.overlay { width: 26px; height: 22px; margin: 0 5px 0 0; }
.name { flex: 0 1 290px; min-width: 0; }
.range { display: flex; align-items: center; gap: 5px; margin-left: auto; padding-right: 1px; }

.charts { position: relative; display: grid; grid-template-columns: minmax(0, 581fr) minmax(0, 578fr); gap: 6px; }
.chart { display: block; width: 100%; background: #fff; }
.chart text { font-size: 11px; white-space: pre; }
.chart .chart-title { font-size: 12px; text-anchor: middle; }
.heat { display: block; }
.grid path, .grid rect, .grid-heat path, .grid-heat rect { fill: none; stroke-width: 1; }
.grid .minor { stroke: #d8d8d8; }
.grid .major { stroke: #707070; }
.grid-heat .minor { stroke: rgba(128, 128, 128, 0.4); }
.grid-heat .major { stroke: rgba(128, 128, 128, 0.75); }
.ink { position: absolute; inset: 0; width: 100%; height: 100%; pointer-events: none; }
.ink path { fill: none; stroke: #80ff9c; stroke-width: 4.5; stroke-linecap: round; stroke-linejoin: round; }
</style>
